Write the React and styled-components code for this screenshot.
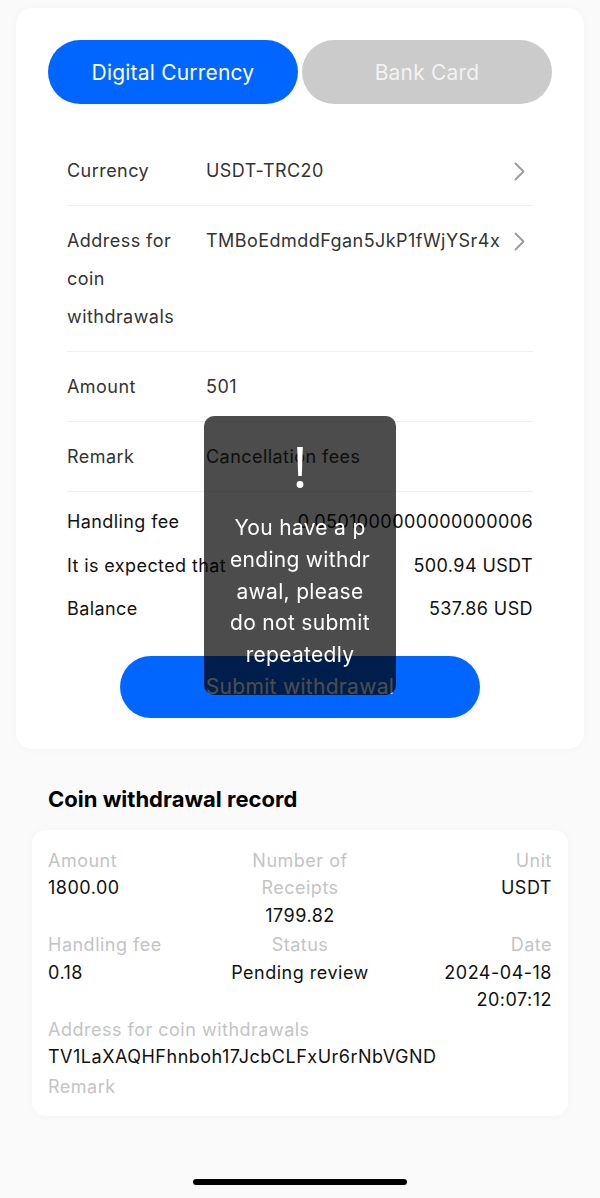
import React from 'react'
import styled, { createGlobalStyle } from 'styled-components'

const GlobalStyle = createGlobalStyle`
  body {
    margin: 0;
    background: #fafafa;
    font-family: Inter, "Liberation Sans", Arial, sans-serif;
  }
`

const Page = styled.div`
  width: 600px;
  min-height: 1198px;
  padding-top: 8px;
  box-sizing: border-box;
  display: flex;
  flex-direction: column;
  background: #fafafa;
`

const Card = styled.div`
  margin: 0 16px;
  padding: 32px 32px 31px;
  background: #fff;
  border-radius: 16px;
  box-shadow: 0 0 10px rgba(0, 0, 0, 0.03);
`

const Tabs = styled.div`
  display: grid;
  grid-template-columns: 1fr 1fr;
  gap: 4px;
`

const Tab = styled.div`
  height: 64px;
  border-radius: 32px;
  display: flex;
  align-items: center;
  justify-content: center;
  font-size: 21px;
  letter-spacing: 0.2px;
  color: ${({ active }) => (active ? '#fff' : '#f2f2f2')};
  background: ${({ active }) => (active ? '#0066ff' : '#cbcbcb')};
`

const Form = styled.div`
  margin: 32px 19px 0;
`

const Row = styled.div`
  display: flex;
  align-items: flex-start;
  padding: 16px 0 15px;
  border-bottom: 1px solid #f0f0f0;
  font-size: 18px;
  letter-spacing: 0.45px;
  line-height: 38px;
  color: #333;
`

const Label = styled.div`
  width: 120px;
  margin-right: 19px;
  flex-shrink: 0;
`

const Value = styled.div`
  flex: 1;
  white-space: nowrap;
`

const Chevron = styled.svg`
  width: 11px;
  height: 19px;
  margin: 10px 8px 0 4px;
  flex-shrink: 0;
`

const Summary = styled.div`
  padding-top: 8px;
`

const SummaryRow = styled.div`
  display: flex;
  justify-content: space-between;
  font-size: 18px;
  letter-spacing: 0.4px;
  line-height: 43.5px;
  color: #111;
  white-space: nowrap;
`

const SubmitButton = styled.div`
  width: 360px;
  height: 62px;
  margin: 25px auto 0;
  border-radius: 31px;
  background: #0066ff;
  color: #fff;
  font-size: 21px;
  letter-spacing: 0.3px;
  display: flex;
  align-items: center;
  justify-content: center;
`

const Toast = styled.div`
  position: fixed;
  top: 416px;
  left: 204px;
  width: 192px;
  height: 279px;
  box-sizing: border-box;
  padding-top: 31px;
  border-radius: 10px;
  background: rgba(0, 0, 0, 0.7);
  color: #fff;
  display: flex;
  flex-direction: column;
  align-items: center;
`

const ToastText = styled.div`
  margin-top: 23px;
  font-size: 21px;
  letter-spacing: 0.3px;
  line-height: 31.8px;
  text-align: center;
  white-space: nowrap;
`

const Line = styled.span`
  display: block;
`

const SectionTitle = styled.div`
  margin: 36px 48px 17px;
  font-size: 22px;
  line-height: 28px;
  font-weight: 700;
  color: #000;
`

const RecordCard = styled.div`
  margin: 0 32px;
  padding: 17px 16px 16px;
  background: #fff;
  border-radius: 14px;
  box-shadow: 0 0 10px rgba(0, 0, 0, 0.03);
  display: flex;
  flex-direction: column;
  gap: 2px;
  font-size: 18px;
  letter-spacing: 0.5px;
  line-height: 27.5px;
`

const RecordGrid = styled.div`
  display: grid;
  grid-template-columns: 1fr 1fr 1fr;
`

const Cell = styled.div`
  text-align: ${({ align }) => align || 'left'};
`

const Caption = styled.div`
  color: #c4c4c4;
`

const Data = styled.div`
  color: #111;
`

const HomeBar = styled.div`
  width: 214px;
  height: 6px;
  border-radius: 3px;
  background: #000;
  margin: auto auto 13px;
`

const ArrowIcon = () => (
  <Chevron viewBox="0 0 11 19">
    <polyline points="1.5,1.5 9.5,9.5 1.5,17.5" fill="none" stroke="#9a9a9a" strokeWidth="1.8" strokeLinecap="round" strokeLinejoin="round" />
  </Chevron>
)

const BangIcon = () => (
  <svg width="12" height="42" viewBox="0 0 12 42">
    <path d="M3.2 0 H8.8 L7.8 29 H4.2 Z" fill="#fff" />
    <circle cx="6" cy="37.5" r="3.4" fill="#fff" />
  </svg>
)

const records = [
  [
    { label: 'Amount', value: '1800.00' },
    { label: <>Number of<br />Receipts</>, value: '1799.82', align: 'center' },
    { label: 'Unit', value: 'USDT', align: 'right' },
  ],
  [
    { label: 'Handling fee', value: '0.18' },
    { label: 'Status', value: 'Pending review', align: 'center' },
    { label: 'Date', value: <>2024-04-18<br />20:07:12</>, align: 'right' },
  ],
]

export default function App() {
  return (
    <>
      <GlobalStyle />
      <Page>
        <Card>
          <Tabs>
            <Tab active>Digital Currency</Tab>
            <Tab>Bank Card</Tab>
          </Tabs>
          <Form>
            <Row>
              <Label>Currency</Label>
              <Value>USDT-TRC20</Value>
              <ArrowIcon />
            </Row>
            <Row>
              <Label>Address for coin withdrawals</Label>
              <Value>TMBoEdmddFgan5JkP1fWjYSr4x</Value>
              <ArrowIcon />
            </Row>
            <Row>
              <Label>Amount</Label>
              <Value>501</Value>
            </Row>
            <Row>
              <Label>Remark</Label>
              <Value>Cancellation fees</Value>
            </Row>
            <Summary>
              <SummaryRow>
                <span>Handling fee</span>
                <span>0.0501000000000000006</span>
              </SummaryRow>
              <SummaryRow>
                <span>It is expected that</span>
                <span>500.94 USDT</span>
              </SummaryRow>
              <SummaryRow>
                <span>Balance</span>
                <span>537.86 USD</span>
              </SummaryRow>
            </Summary>
          </Form>
          <SubmitButton>Submit withdrawal</SubmitButton>
        </Card>

        <SectionTitle>Coin withdrawal record</SectionTitle>
        <RecordCard>
          {records.map((row, i) => (
            <RecordGrid key={i}>
              {row.map((c, j) => (
                <Cell key={j} align={c.align}>
                  <Caption>{c.label}</Caption>
                  <Data>{c.value}</Data>
                </Cell>
              ))}
            </RecordGrid>
          ))}
          <Cell>
            <Caption>Address for coin withdrawals</Caption>
            <Data>TV1LaXAQHFhnboh17JcbCLFxUr6rNbVGND</Data>
          </Cell>
          <Cell>
            <Caption>Remark</Caption>
          </Cell>
        </RecordCard>
        <HomeBar />

        <Toast>
          <BangIcon />
          <ToastText>
            <Line>You have a p</Line>
            <Line>ending withdr</Line>
            <Line>awal, please</Line>
            <Line>do not submit</Line>
            <Line>repeatedly</Line>
          </ToastText>
        </Toast>
      </Page>
    </>
  )
}
